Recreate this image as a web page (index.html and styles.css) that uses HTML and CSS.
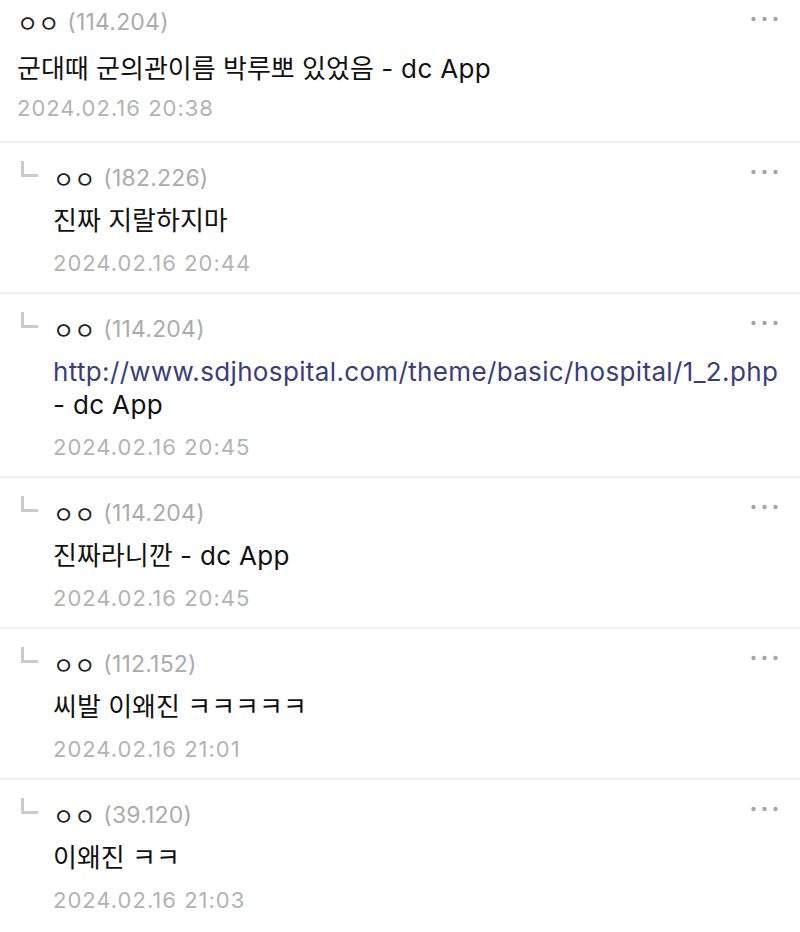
FILE: index.html
```html
<!DOCTYPE html>
<html lang="ko">
<head>
  <meta charset="UTF-8">
  <meta name="viewport" content="width=device-width, initial-scale=1">
  <title>댓글</title>
  <link rel="stylesheet" href="styles.css">
</head>
<body>

  <ul class="cmt-list">
    <li class="cmt first">
      <div class="cmt-body">
        <div class="cmt-head">
          <span class="nick">ㅇㅇ</span>
          <span class="ip">(114.204)</span>
          <button class="more" type="button"><svg width="27" height="6" viewBox="0 0 27 6"><circle cx="2.5" cy="3" r="2.2"/><circle cx="13.5" cy="3" r="2.2"/><circle cx="24.5" cy="3" r="2.2"/></svg></button>
        </div>
        <p class="txt">군대때 군의관이름 박루뽀 있었음 <span class="en">- dc App</span></p>
        <span class="date">2024.02.16 20:38</span>
      </div>
    </li>
    <li class="cmt reply">
      <span class="reply-mark"></span>
      <div class="cmt-body">
        <div class="cmt-head">
          <span class="nick">ㅇㅇ</span>
          <span class="ip">(182.226)</span>
          <button class="more" type="button"><svg width="27" height="6" viewBox="0 0 27 6"><circle cx="2.5" cy="3" r="2.2"/><circle cx="13.5" cy="3" r="2.2"/><circle cx="24.5" cy="3" r="2.2"/></svg></button>
        </div>
        <p class="txt">진짜 지랄하지마</p>
        <span class="date">2024.02.16 20:44</span>
      </div>
    </li>
    <li class="cmt reply">
      <span class="reply-mark"></span>
      <div class="cmt-body">
        <div class="cmt-head">
          <span class="nick">ㅇㅇ</span>
          <span class="ip">(114.204)</span>
          <button class="more" type="button"><svg width="27" height="6" viewBox="0 0 27 6"><circle cx="2.5" cy="3" r="2.2"/><circle cx="13.5" cy="3" r="2.2"/><circle cx="24.5" cy="3" r="2.2"/></svg></button>
        </div>
        <p class="txt"><a class="en link" href="#">http://www.sdjhospital.com/theme/basic/hospital/1_2.php</a> <span class="en">- dc App</span></p>
        <span class="date">2024.02.16 20:45</span>
      </div>
    </li>
    <li class="cmt reply">
      <span class="reply-mark"></span>
      <div class="cmt-body">
        <div class="cmt-head">
          <span class="nick">ㅇㅇ</span>
          <span class="ip">(114.204)</span>
          <button class="more" type="button"><svg width="27" height="6" viewBox="0 0 27 6"><circle cx="2.5" cy="3" r="2.2"/><circle cx="13.5" cy="3" r="2.2"/><circle cx="24.5" cy="3" r="2.2"/></svg></button>
        </div>
        <p class="txt">진짜라니깐 <span class="en">- dc App</span></p>
        <span class="date">2024.02.16 20:45</span>
      </div>
    </li>
    <li class="cmt reply">
      <span class="reply-mark"></span>
      <div class="cmt-body">
        <div class="cmt-head">
          <span class="nick">ㅇㅇ</span>
          <span class="ip">(112.152)</span>
          <button class="more" type="button"><svg width="27" height="6" viewBox="0 0 27 6"><circle cx="2.5" cy="3" r="2.2"/><circle cx="13.5" cy="3" r="2.2"/><circle cx="24.5" cy="3" r="2.2"/></svg></button>
        </div>
        <p class="txt">씨발 이왜진 ㅋㅋㅋㅋㅋ</p>
        <span class="date">2024.02.16 21:01</span>
      </div>
    </li>
    <li class="cmt reply">
      <span class="reply-mark"></span>
      <div class="cmt-body">
        <div class="cmt-head">
          <span class="nick">ㅇㅇ</span>
          <span class="ip">(39.120)</span>
          <button class="more" type="button"><svg width="27" height="6" viewBox="0 0 27 6"><circle cx="2.5" cy="3" r="2.2"/><circle cx="13.5" cy="3" r="2.2"/><circle cx="24.5" cy="3" r="2.2"/></svg></button>
        </div>
        <p class="txt">이왜진 ㅋㅋ</p>
        <span class="date">2024.02.16 21:03</span>
      </div>
    </li>
  </ul>

</body>
</html>
```
FILE: styles.css
```css
* {
  box-sizing: border-box;
}

body {
  margin: 0;
  background-color: #fff;
  font-family: Inter, "Noto Sans CJK KR", sans-serif;
  color: #111;
}

.cmt-list {
  list-style: none;
  margin: 0;
  padding: 0;
}

.cmt {
  display: flex;
  padding: 18px 22px 12px 21px;
  border-bottom: 2px solid #efefef;
}

.cmt.first {
  padding: 5px 22px 16px 17px;
}

.cmt:last-child {
  border-bottom: none;
}

.cmt-body {
  flex: 1;
  display: flex;
  flex-direction: column;
  gap: 9px;
}

.cmt.first .txt {
  margin-top: 4px;
}

.cmt.first .date {
  margin-top: -3px;
}

.reply-mark {
  flex: none;
  width: 17px;
  height: 16px;
  margin-right: 15px;
  border-left: 3px solid #cbcbcb;
  border-bottom: 3px solid #cbcbcb;
}

.cmt-head {
  display: flex;
  align-items: center;
  height: 34px;
  font-size: 23px;
}

.nick {
  color: #222;
  margin-right: 8px;
}

.ip {
  color: #ababab;
  letter-spacing: 0.2px;
}

.more {
  margin: -12px 0 0 auto;
  padding: 0;
  border: none;
  background: none;
  fill: #a5a5a5;
  line-height: 0;
  cursor: pointer;
}

.cmt.first .more {
  margin-top: -6px;
}

.txt {
  margin: 0;
  font-size: 26px;
  line-height: 33px;
  color: #111;
}

.en {
  letter-spacing: 0.35px;
}

.link {
  color: #3a3d7c;
  text-decoration: none;
  white-space: nowrap;
}

.date {
  font-size: 22px;
  line-height: 34px;
  color: #b3b3b3;
  letter-spacing: 1px;
}
```
